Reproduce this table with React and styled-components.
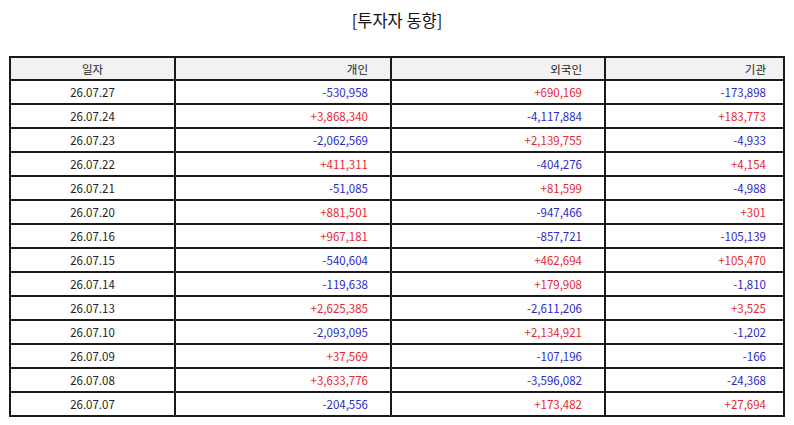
import React from 'react';
import styled, { createGlobalStyle } from 'styled-components';

const rows = [
  ['26.07.27', '-530,958', '+690,169', '-173,898'],
  ['26.07.24', '+3,868,340', '-4,117,884', '+183,773'],
  ['26.07.23', '-2,062,569', '+2,139,755', '-4,933'],
  ['26.07.22', '+411,311', '-404,276', '+4,154'],
  ['26.07.21', '-51,085', '+81,599', '-4,988'],
  ['26.07.20', '+881,501', '-947,466', '+301'],
  ['26.07.16', '+967,181', '-857,721', '-105,139'],
  ['26.07.15', '-540,604', '+462,694', '+105,470'],
  ['26.07.14', '-119,638', '+179,908', '-1,810'],
  ['26.07.13', '+2,625,385', '-2,611,206', '+3,525'],
  ['26.07.10', '-2,093,095', '+2,134,921', '-1,202'],
  ['26.07.09', '+37,569', '-107,196', '-166'],
  ['26.07.08', '+3,633,776', '-3,596,082', '-24,368'],
  ['26.07.07', '-204,556', '+173,482', '+27,694'],
];

const columns = [
  { label: '일자', width: 165, pad: 0, align: 'center' },
  { label: '개인', width: 216, pad: 22, align: 'right' },
  { label: '외국인', width: 214, pad: 22, align: 'right' },
  { label: '기관', width: 179, pad: 17, align: 'right' },
];

export default function App() {
  return (
    <>
      <GlobalStyle />
      <Page>
        <Title>[투자자 동향]</Title>
        <Table>
          <colgroup>
            {columns.map((c) => (
              <col key={c.label} style={{ width: c.width }} />
            ))}
          </colgroup>
          <thead>
            <tr>
              {columns.map((c) => (
                <HeadCell key={c.label} $align={c.align} $pad={c.pad}>
                  {c.label}
                </HeadCell>
              ))}
            </tr>
          </thead>
          <tbody>
            {rows.map((r) => (
              <tr key={r[0]}>
                <Cell $align="center" $pad={0}>{r[0]}</Cell>
                {r.slice(1).map((v, i) => (
                  <Cell
                    key={i}
                    $align="right"
                    $pad={columns[i + 1].pad}
                    $tone={v.startsWith('+') ? 'up' : 'down'}
                  >
                    {v}
                  </Cell>
                ))}
              </tr>
            ))}
          </tbody>
        </Table>
      </Page>
    </>
  );
}

const GlobalStyle = createGlobalStyle`
  body {
    margin: 0;
    background: #fff;
    font-family: "Noto Sans CJK KR", "Noto Sans", sans-serif;
  }
`;

const Page = styled.div`
  width: 794px;
  padding: 8px 10px 0;
  box-sizing: border-box;
`;

const Title = styled.div`
  font-size: 16.5px;
  line-height: 24px;
  color: #111;
  text-align: center;
  margin-bottom: 24px;
`;

const Table = styled.table`
  width: 776px;
  margin-left: -1px;
  border-collapse: collapse;
  table-layout: fixed;
  font-size: 11.5px;
`;

const HeadCell = styled.th`
  height: 21px;
  padding: 0 ${(p) => p.$pad}px 0 0;
  border: 2px solid #1a1a1a;
  background: #f2f2f2;
  font-weight: normal;
  color: #222;
  text-align: ${(p) => p.$align};
`;

const Cell = styled.td`
  height: 22px;
  padding: 0 ${(p) => p.$pad}px 0 0;
  border: 2px solid #1a1a1a;
  color: ${(p) => (p.$tone === 'up' ? '#e8262f' : p.$tone === 'down' ? '#2a2ac8' : '#222')};
  text-align: ${(p) => p.$align};
`;
